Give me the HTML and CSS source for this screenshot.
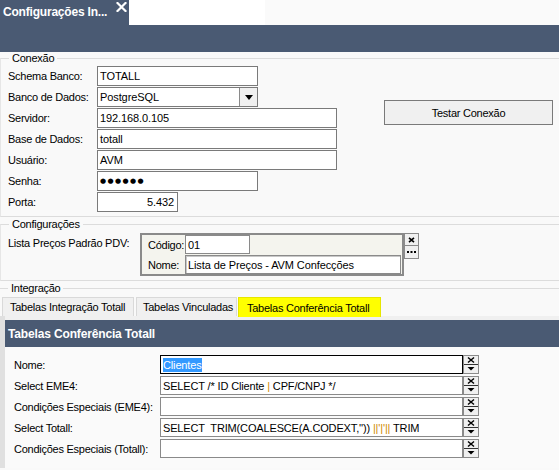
FILE: index.html
```html
<!DOCTYPE html>
<html lang="pt-BR">
<head>
<meta charset="utf-8">
<title>Configurações Integração</title>
<link rel="stylesheet" href="styles.css">
</head>
<body>
<div class="tabstrip">
  <div class="doctab">
    <span class="doctab-title">Configurações In...</span>
    <svg class="doctab-close" width="11" height="10" viewBox="0 0 11 10"><path d="M1.5 1 L9.5 9 M9.5 1 L1.5 9" stroke="#fff" stroke-width="2.2" stroke-linecap="square"/></svg>
  </div>
  <div class="tabstrip-blank"></div>
  <div class="tabstrip-rest"></div>
</div>
<div class="toolbar"></div>

<fieldset class="group">
  <legend>Conexão</legend>
  <div class="conexao">
    <div class="form">
      <label class="lbl">Schema Banco:</label>
      <div class="inp w-short">TOTALL</div>
      <label class="lbl">Banco de Dados:</label>
      <div class="inp w-short combo"><span class="combo-text">PostgreSQL</span><span class="combo-btn"><svg width="8" height="5" viewBox="0 0 8 5"><path d="M0 0 H8 L4 5 Z" fill="#000"/></svg></span></div>
      <label class="lbl">Servidor:</label>
      <div class="inp w-long">192.168.0.105</div>
      <label class="lbl">Base de Dados:</label>
      <div class="inp w-long">totall</div>
      <label class="lbl">Usuário:</label>
      <div class="inp w-long">AVM</div>
      <label class="lbl">Senha:</label>
      <div class="inp w-short"><span class="dots">●●●●●●</span></div>
      <label class="lbl">Porta:</label>
      <div class="inp w-porta num">5.432</div>
    </div>
    <div class="side">
      <div class="btn">Testar Conexão</div>
    </div>
  </div>
</fieldset>

<fieldset class="group group-config">
  <legend>Configurações</legend>
  <div class="config">
    <div class="config-lbl">Lista Preços Padrão PDV:</div>
    <div class="lookup">
      <label class="lbl">Código:</label>
      <div class="inp inp-small w-cod">01</div>
      <label class="lbl">Nome:</label>
      <div class="inp inp-small w-nome nome-inp">Lista de Preços - AVM Confecções</div>
    </div>
    <div class="lookup-btns">
      <div class="mini-btn"><svg width="7" height="6" viewBox="0 0 7 6"><path d="M1 0.8 L6 5.2 M6 0.8 L1 5.2" stroke="#000" stroke-width="1.6"/></svg></div>
      <div class="mini-btn"><svg width="9" height="3" viewBox="0 0 9 3"><rect x="0" y="0" width="2" height="2" fill="#000"/><rect x="3.5" y="0" width="2" height="2" fill="#000"/><rect x="7" y="0" width="2" height="2" fill="#000"/></svg></div>
    </div>
  </div>
</fieldset>

<fieldset class="group group-integ">
  <legend>Integração</legend>
  <div class="tabs">
    <div class="tab tab-1">Tabelas Integração Totall</div>
    <div class="tab tab-2">Tabelas Vinculadas</div>
    <div class="tab tab-active">Tabelas Conferência Totall</div>
  </div>
  <div class="tabpage">
    <div class="page-header">Tabelas Conferência Totall</div>
    <div class="memo-form">
      <label class="lbl">Nome:</label>
      <div class="memo-row">
        <div class="memo memo-focus"><span class="sel">Clientes</span></div>
        <div class="memo-btn"><svg width="14" height="17" viewBox="0 0 14 17"><path d="M4 1.5 L10 6.5 M10 1.5 L4 6.5" stroke="#000" stroke-width="1.5"/><path d="M0 8.5 H14" stroke="#333" stroke-width="1"/><path d="M3.5 11 H10.5 L7 14.5 Z" fill="#000"/></svg></div>
      </div>
      <label class="lbl">Select EME4:</label>
      <div class="memo-row">
        <div class="memo">SELECT /* ID Cliente <span class="pipe">|</span> CPF/CNPJ */</div>
        <div class="memo-btn"><svg width="14" height="17" viewBox="0 0 14 17"><path d="M4 1.5 L10 6.5 M10 1.5 L4 6.5" stroke="#000" stroke-width="1.5"/><path d="M0 8.5 H14" stroke="#333" stroke-width="1"/><path d="M3.5 11 H10.5 L7 14.5 Z" fill="#000"/></svg></div>
      </div>
      <label class="lbl">Condições Especiais (EME4):</label>
      <div class="memo-row">
        <div class="memo"></div>
        <div class="memo-btn"><svg width="14" height="17" viewBox="0 0 14 17"><path d="M4 1.5 L10 6.5 M10 1.5 L4 6.5" stroke="#000" stroke-width="1.5"/><path d="M0 8.5 H14" stroke="#333" stroke-width="1"/><path d="M3.5 11 H10.5 L7 14.5 Z" fill="#000"/></svg></div>
      </div>
      <label class="lbl">Select Totall:</label>
      <div class="memo-row">
        <div class="memo">SELECT  TRIM(COALESCE(A.CODEXT,'')) <span class="pipe">||'|'||</span> TRIM</div>
        <div class="memo-btn"><svg width="14" height="17" viewBox="0 0 14 17"><path d="M4 1.5 L10 6.5 M10 1.5 L4 6.5" stroke="#000" stroke-width="1.5"/><path d="M0 8.5 H14" stroke="#333" stroke-width="1"/><path d="M3.5 11 H10.5 L7 14.5 Z" fill="#000"/></svg></div>
      </div>
      <label class="lbl">Condições Especiais (Totall):</label>
      <div class="memo-row">
        <div class="memo"></div>
        <div class="memo-btn"><svg width="14" height="17" viewBox="0 0 14 17"><path d="M4 1.5 L10 6.5 M10 1.5 L4 6.5" stroke="#000" stroke-width="1.5"/><path d="M0 8.5 H14" stroke="#333" stroke-width="1"/><path d="M3.5 11 H10.5 L7 14.5 Z" fill="#000"/></svg></div>
      </div>
    </div>
  </div>
</fieldset>
</body>
</html>
```
FILE: styles.css
```css
* { box-sizing: border-box; }
html, body { margin: 0; padding: 0; }
body {
  width: 559px;
  height: 470px;
  overflow: hidden;
  background: #f9f9f9;
  font-family: "Liberation Sans", Arial, sans-serif;
  font-size: 11px;
  letter-spacing: -0.25px;
  color: #000;
}

/* top document tab strip */
.tabstrip { display: flex; height: 25px; }
.doctab {
  width: 129px;
  background: #4a5a73;
  color: #fff;
  display: flex;
  align-items: flex-start;
  padding-left: 3px;
}
.doctab-title {
  font-weight: bold;
  font-size: 12px;
  letter-spacing: -0.2px;
  line-height: 14px;
  margin-top: 5px;
}
.doctab-close { margin-left: auto; margin-right: 2px; margin-top: 2px; }
.tabstrip-blank { width: 136px; background: #ffffff; }
.tabstrip-rest { flex: 1; background: #fafafa; }
.toolbar { height: 27px; background: #4a5a73; }

/* group boxes */
.group {
  margin: 0;
  padding: 0;
  border: 0;
  border-top: 1px solid #dcdcdc;
  border-bottom: 1px solid #dcdcdc;
  border-left: 1px solid #e6e6e6;
  min-width: 0;
}
.group legend {
  padding: 0 3px;
  margin-left: 8px;
  line-height: 13px;
  font-size: 11px;
  color: #000;
}
.group-config { margin-top: 1px; }
.group-integ { margin-top: 1px; border-bottom: 0; border-left: 0; }

.lbl { display: flex; align-items: center; white-space: nowrap; }

/* Conexão */
.conexao { display: flex; padding: 1px 0 4px 0; }
.form {
  display: grid;
  grid-template-columns: 89px auto;
  row-gap: 1px;
  padding-left: 7px;
  justify-items: start;
}
.inp {
  height: 20px;
  border: 1px solid #7a7a7a;
  background: #fff;
  padding: 0 2px;
  display: flex;
  align-items: center;
  white-space: nowrap;
  letter-spacing: -0.1px;
  overflow: hidden;
}
.w-short { width: 161px; }
.w-long { width: 240px; }
.w-porta { width: 81px; }
.num { justify-content: flex-end; padding-right: 3px; }
.combo { padding-right: 0; }
.combo-text { flex: 1; }
.combo-btn {
  width: 18px;
  height: 18px;
  background: #f0f0f0;
  border-left: 1px solid #8a8a8a;
  display: flex;
  align-items: center;
  justify-content: center;
}
.dots {
  font-family: "DejaVu Sans", sans-serif;
  font-size: 7px;
  letter-spacing: 1.4px;
}
.side { padding-top: 34px; margin-left: 47px; }
.btn {
  width: 169px;
  height: 25px;
  background: #f0f0f0;
  border: 1px solid #7a7a7a;
  display: flex;
  align-items: center;
  justify-content: center;
}

/* Configurações */
.config { display: flex; align-items: flex-start; padding: 2px 0 4px 0; }
.config-lbl { width: 139px; padding-left: 7px; padding-top: 4px; line-height: 13px; white-space: nowrap; }
.lookup {
  width: 264px;
  height: 43px;
  background: #f4f4ee;
  border: 2px solid #8a8a8a;
  display: grid;
  grid-template-columns: 37px auto;
  row-gap: 1px;
  padding-left: 6px;
  justify-items: start;
}
.inp-small { height: 19px; border-color: #8a8a8a; }
.w-cod { width: 65px; }
.w-nome { width: 216px; }
.nome-inp { box-shadow: inset 1px 1px 0 #c8c8c8; }
.lookup-btns { display: flex; flex-direction: column; }
.mini-btn {
  width: 15px;
  height: 13px;
  background: #f0f0f0;
  border: 1px solid #8a8a8a;
  display: flex;
  align-items: center;
  justify-content: center;
}
.mini-btn + .mini-btn { border-top: 0; }

/* Integração tabs */
.tabs { display: flex; align-items: flex-end; padding-top: 1px; padding-left: 2px; height: 21px; }
.tab {
  height: 19px;
  background: #f0f0f0;
  border: 1px solid #d9d9d9;
  border-bottom: 0;
  display: flex;
  align-items: center;
  padding-left: 7px;
  white-space: nowrap;
}
.tab-1 { width: 132px; margin-right: 2px; }
.tab-2 { width: 101px; margin-right: 1px; padding-left: 6px; }
.tab-active {
  width: 143px;
  height: 20px;
  background: #ffff00;
  border-color: #e6e600;
  padding-left: 8px;
  margin-bottom: -1px;
}
.tabpage {
  border-left: 5px solid #e0e0e0;
  background: #fafafa;
  padding-top: 4px;
  height: 152px;
  box-shadow: inset 0 4px 0 #f0f0f0;
}
.page-header {
  height: 27px;
  background: #4a5a73;
  color: #fff;
  font-weight: bold;
  font-size: 12px;
  letter-spacing: -0.15px;
  display: flex;
  align-items: center;
  padding-left: 3px;
}
.memo-form {
  display: grid;
  grid-template-columns: 146px auto;
  row-gap: 2px;
  padding: 8px 0 0 9px;
  justify-items: start;
}
.memo-row { display: flex; }
.memo {
  width: 303px;
  height: 19px;
  border: 1px solid #8a8a8a;
  background: #fff;
  padding: 0 2px;
  display: flex;
  align-items: center;
  white-space: pre;
  letter-spacing: -0.15px;
  overflow: hidden;
}
.memo-focus { border-color: #000; }
.sel { background: #3399ff; color: #fff; padding: 1px 0; }
.pipe { color: #d08a00; }
.memo-btn {
  width: 16px;
  height: 19px;
  border: 1px solid #8a8a8a;
  background: #f0f0f0;
  display: flex;
  align-items: center;
  justify-content: center;
}
```
